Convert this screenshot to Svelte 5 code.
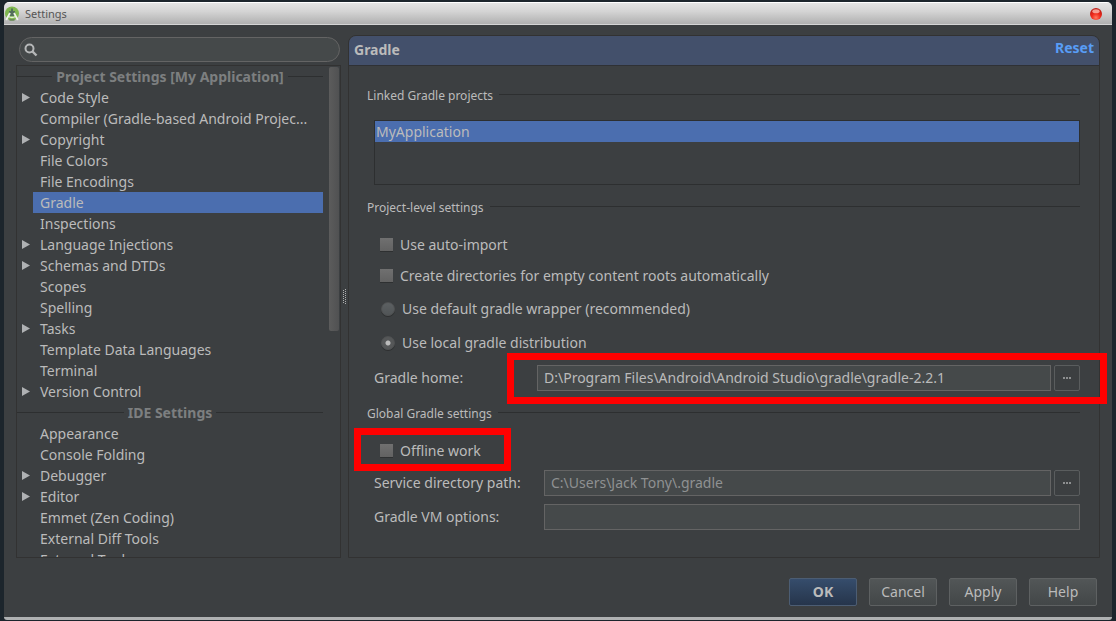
<script lang="ts">
  interface Item {
    label: string;
    parent?: boolean;
  }

  interface Group {
    title: string;
    items: Item[];
  }

  const groups: Group[] = [
    {
      title: "Project Settings [My Application]",
      items: [
        { label: "Code Style", parent: true },
        { label: "Compiler (Gradle-based Android Projec..." },
        { label: "Copyright", parent: true },
        { label: "File Colors" },
        { label: "File Encodings" },
        { label: "Gradle" },
        { label: "Inspections" },
        { label: "Language Injections", parent: true },
        { label: "Schemas and DTDs", parent: true },
        { label: "Scopes" },
        { label: "Spelling" },
        { label: "Tasks", parent: true },
        { label: "Template Data Languages" },
        { label: "Terminal" },
        { label: "Version Control", parent: true },
      ],
    },
    {
      title: "IDE Settings",
      items: [
        { label: "Appearance" },
        { label: "Console Folding" },
        { label: "Debugger", parent: true },
        { label: "Editor", parent: true },
        { label: "Emmet (Zen Coding)" },
        { label: "External Diff Tools" },
        { label: "External Tools" },
      ],
    },
  ];

  let selected = $state("Gradle");
  let search = $state("");
  let autoImport = $state(false);
  let createDirs = $state(false);
  let offline = $state(false);
  let distribution = $state("local");
  let gradleHome = $state("D:\\Program Files\\Android\\Android Studio\\gradle\\gradle-2.2.1");
  let servicePath = $state("C:\\Users\\Jack Tony\\.gradle");
  let vmOptions = $state("");
</script>

{#snippet dots()}
  <svg width="9" height="2" viewBox="0 0 9 2" aria-hidden="true">
    <path d="M0 0h2v2H0zM3 0h2v2H3zM6 0h2v2H6z" fill="#8d8f90" />
  </svg>
{/snippet}

<div class="desktop">
  <div class="window">
    <header class="titlebar">
      <svg class="logo" width="16" height="16" viewBox="0 0 16 16" aria-hidden="true">
        <circle cx="8" cy="7.5" r="7" fill="#80b850" />
        <path d="M7 2.5h2V5h2v5H5V5h2z" fill="#52705a" />
        <path d="M6 7 2.2 14M10 7l3.8 7" stroke="#f0f5ea" stroke-width="1.8" fill="none" />
        <path d="M4.5 10.5q3.5 2 7 0" stroke="#e4eedb" stroke-width="1.3" fill="none" />
        <path d="M5.5 13h5v1.8h-5z" fill="#6b8a5c" />
      </svg>
      <span class="window-title">Settings</span>
      <button class="close" aria-label="Close">
        <svg width="14" height="14" viewBox="0 0 14 14" aria-hidden="true">
          <defs>
            <radialGradient id="red" cx="0.5" cy="0.8" r="0.7">
              <stop offset="0" stop-color="#ff7a60" />
              <stop offset="0.5" stop-color="#f02a1c" />
              <stop offset="1" stop-color="#c01c14" />
            </radialGradient>
          </defs>
          <circle cx="7" cy="7" r="6" fill="url(#red)" />
          <ellipse cx="7" cy="4.2" rx="3.6" ry="2" fill="#ffc8bc" opacity="0.75" />
        </svg>
      </button>
    </header>

    <main>
      <aside>
        <label class="search">
          <svg width="14" height="14" viewBox="0 0 14 14" aria-hidden="true">
            <circle cx="5.5" cy="5.5" r="4" fill="none" stroke="#b5b7b8" stroke-width="2" />
            <path d="m8.5 8.5 4 4" stroke="#b5b7b8" stroke-width="2.4" />
          </svg>
          <input type="text" aria-label="Search settings" bind:value={search} />
        </label>
        <div class="tree">
          <nav>
            {#each groups as group}
              <h2>{group.title}</h2>
              <ul>
                {#each group.items as item}
                  <li>
                    <span class="arrow">
                      {#if item.parent}
                        <svg width="8" height="9" viewBox="0 0 8 9" aria-hidden="true">
                          <path d="M0 0 8 4.5 0 9z" fill="#afb1b3" />
                        </svg>
                      {/if}
                    </span>
                    <button
                      class="item"
                      class:selected={item.label === selected}
                      onclick={() => (selected = item.label)}
                    >
                      {item.label}
                    </button>
                  </li>
                {/each}
              </ul>
            {/each}
          </nav>
          <div class="scrollbar"></div>
        </div>
      </aside>

      <div class="splitter">
        <svg width="4" height="15" viewBox="0 0 4 15" aria-hidden="true">
          <path d="M2.5 0v15" stroke="#b0b0b0" stroke-dasharray="1 1" />
          <path d="M.5 1v14" stroke="#b0b0b0" stroke-dasharray="1 1" />
        </svg>
      </div>

      <section class="panel">
        <div class="panel-header">
          <h1>Gradle</h1>
          <a href="#reset">Reset</a>
        </div>

        <div class="panel-body">
          <h3>Linked Gradle projects</h3>
          <ul class="projects">
            <li>MyApplication</li>
          </ul>

          <h3 class="project-heading">Project-level settings</h3>
          <div class="checks">
            <label class="option">
              <input type="checkbox" bind:checked={autoImport} />
              Use auto-import
            </label>
            <label class="option">
              <input type="checkbox" bind:checked={createDirs} />
              Create directories for empty content roots automatically
            </label>
          </div>
          <div class="radios">
            <label class="option">
              <input type="radio" value="default" bind:group={distribution} />
              Use default gradle wrapper (recommended)
            </label>
            <label class="option">
              <input type="radio" value="local" bind:group={distribution} />
              Use local gradle distribution
            </label>
          </div>
          <div class="field home">
            <label for="home">Gradle home:</label>
            <div class="path marked">
              <input id="home" type="text" bind:value={gradleHome} />
              <button class="browse" aria-label="Browse Gradle home">{@render dots()}</button>
            </div>
          </div>

          <h3 class="global-heading">Global Gradle settings</h3>
          <label class="option offline marked">
            <input type="checkbox" bind:checked={offline} />
            Offline work
          </label>
          <div class="field">
            <label for="service">Service directory path:</label>
            <div class="path">
              <input id="service" class="muted" type="text" bind:value={servicePath} />
              <button class="browse" aria-label="Browse service directory">{@render dots()}</button>
            </div>
          </div>
          <div class="field">
            <label for="vm">Gradle VM options:</label>
            <div class="path">
              <input id="vm" type="text" bind:value={vmOptions} />
            </div>
          </div>
        </div>
      </section>
    </main>

    <footer>
      <button class="action primary">OK</button>
      <button class="action">Cancel</button>
      <button class="action">Apply</button>
      <button class="action">Help</button>
    </footer>
  </div>
</div>

<style>
  :global(body) {
    background: #1c252c;
  }

  * {
    box-sizing: border-box;
  }

  .desktop {
    display: flex;
    height: 100vh;
    min-height: 600px;
    padding: 2px 4px 1px;
    color: #bbbbbb;
    font-family: "Noto Sans", "Open Sans", sans-serif;
    font-size: 14px;
    line-height: 20px;
  }

  button,
  input {
    font: inherit;
    color: inherit;
    margin: 0;
  }

  h1,
  h2,
  h3,
  ul {
    margin: 0;
    padding: 0;
    list-style: none;
  }

  .window {
    flex: 1;
    min-width: 0;
    display: flex;
    flex-direction: column;
    background: #3c3f41;
    border-bottom: 3px solid #afb1b2;
    border-radius: 5px 5px 3px 3px;
    overflow: hidden;
  }

  .titlebar {
    display: flex;
    align-items: center;
    height: 23px;
    flex: none;
    padding: 0 9px 0 0;
    background: linear-gradient(#e4e4e4, #d4d4d4 40%, #b0b0b0);
    border-top: 1px solid #ffffff;
    border-bottom: 1px solid #d5d5d5;
  }

  .window-title {
    flex: 1;
    margin-left: 5px;
    color: #555555;
    font-size: 11px;
  }

  .close {
    display: flex;
    padding: 0;
    border: 0;
    background: none;
  }

  main {
    flex: 1;
    min-height: 0;
    display: flex;
    padding: 10px 12px 0;
  }

  aside {
    flex: 0 0 325px;
    display: flex;
    flex-direction: column;
    min-height: 0;
  }

  .search {
    display: flex;
    align-items: center;
    flex: none;
    height: 25px;
    margin: 2px 1px 3px 3px;
    padding: 0 4px;
    background: #45494a;
    border: 1px solid #646464;
    border-radius: 13px;
  }

  .search input {
    flex: 1;
    min-width: 0;
    border: 0;
    outline: 0;
    background: none;
  }

  .tree {
    flex: 1;
    min-height: 0;
    display: flex;
    border: 1px solid #323232;
    overflow: hidden;
  }

  nav {
    flex: 1;
    min-width: 0;
  }

  h2 {
    display: flex;
    align-items: center;
    gap: 4px;
    height: 21px;
    color: #7d7f80;
    font-size: 14px;
    white-space: nowrap;
  }

  h2::before,
  h2::after,
  h3::after {
    content: "";
    flex: 1;
    height: 1px;
    background: #2d2f30;
  }

  nav li {
    display: flex;
    height: 21px;
  }

  .arrow {
    flex: 0 0 16px;
    display: flex;
    align-items: center;
    padding-left: 5px;
  }

  .item {
    flex: 1;
    min-width: 0;
    padding: 0 7px;
    border: 0;
    background: none;
    text-align: left;
    line-height: 21px;
    white-space: nowrap;
  }

  .item.selected {
    background: #4b6eaf;
  }

  .scrollbar {
    flex: none;
    width: 10px;
    height: 264px;
    margin: 1px 1px 0 6px;
    background: linear-gradient(90deg, #5c5c5c, #505152);
    border-radius: 2px;
  }

  .splitter {
    flex: 0 0 7px;
    display: flex;
    align-items: center;
    justify-content: center;
  }

  .panel {
    flex: 1;
    min-width: 0;
    border: 1px solid #323232;
    border-radius: 8px 8px 0 0;
  }

  .panel-header {
    display: flex;
    justify-content: space-between;
    height: 30px;
    padding: 0 5px;
    background: #43506b;
    border-bottom: 1px solid #2f3135;
    border-radius: 7px 7px 0 0;
    font-weight: bold;
  }

  h1 {
    font-size: 14px;
    line-height: 27px;
  }

  .panel-header a {
    color: #589df6;
    line-height: 23px;
    text-decoration: none;
  }

  .panel-body {
    padding: 20px 19px 0 18px;
  }

  h3 {
    display: flex;
    align-items: center;
    gap: 6px;
    height: 20px;
    font-size: 12px;
    font-weight: normal;
  }

  h3::after {
    margin-bottom: 4px;
  }

  .projects {
    height: 65px;
    margin: 14px 0 0 7px;
    border: 1px solid #2d2f30;
  }

  .projects li {
    height: 21px;
    padding-left: 1px;
    background: #4b6eaf;
    line-height: 21px;
  }

  .project-heading {
    margin-top: 13px;
  }

  .global-heading {
    margin-top: 13px;
  }

  .checks,
  .radios {
    display: flex;
    flex-direction: column;
    align-items: flex-start;
  }

  .checks {
    gap: 6px;
    margin: 14px 0 8px 13px;
  }

  .radios {
    gap: 9px;
    margin: 0 0 10px 14px;
  }

  .option {
    display: flex;
    align-items: center;
    gap: 7px;
    height: 25px;
  }

  .option input {
    appearance: none;
    width: 13px;
    height: 13px;
    background: linear-gradient(#707070, #626262);
    box-shadow: 0 1px #2e3031;
  }

  .option input[type="radio"] {
    width: 14px;
    height: 14px;
    border: 1px solid #4f5152;
    border-radius: 50%;
    background: linear-gradient(#5c6062, #515557);
  }

  .option input[type="radio"]:checked {
    background: radial-gradient(circle, #bbbbbb 2px, #555758 3px);
  }

  .option input[type="checkbox"]:checked {
    background: radial-gradient(circle, #bbbbbb 3px, #626262 4px);
  }

  .offline {
    width: fit-content;
    margin: 14px 0 7px 13px;
  }

  .field {
    display: flex;
    align-items: center;
    height: 26px;
    margin: 0 0 8px 7px;
  }

  .field > label {
    flex: 0 0 170px;
  }

  .home {
    margin-bottom: 0;
  }

  .home > label {
    flex-basis: 163px;
  }

  .path {
    flex: 1;
    display: flex;
    gap: 3px;
    min-width: 0;
  }

  .path input {
    flex: 1;
    min-width: 0;
    height: 26px;
    padding: 0 6px 2px;
    background: #45494a;
    border: 1px solid #646464;
  }

  .path .muted {
    color: #8f9192;
  }

  .browse {
    display: flex;
    align-items: center;
    justify-content: center;
    width: 26px;
    height: 26px;
    padding: 0;
    background: #3c3f41;
    border: 1px solid #5a5d5e;
    border-radius: 2px;
  }

  /* red callout frame drawn around a control */
  .marked {
    position: relative;
  }

  .marked::after {
    content: "";
    position: absolute;
    inset: -12px -27px -13px -30px;
    border: 7px solid #ff0000;
    pointer-events: none;
  }

  .offline.marked::after {
    inset: -10px -30px -8px -26px;
  }

  footer {
    display: flex;
    justify-content: flex-end;
    gap: 12px;
    padding: 20px 15px 11px;
  }

  .action {
    width: 68px;
    height: 28px;
    padding: 0;
    background: linear-gradient(#525657, #434748);
    border: 1px solid #5e6162;
    border-radius: 2px;
  }

  .primary {
    background: linear-gradient(#364d6c, #26354b);
    border-color: #4c5d73;
    font-weight: bold;
  }
</style>
